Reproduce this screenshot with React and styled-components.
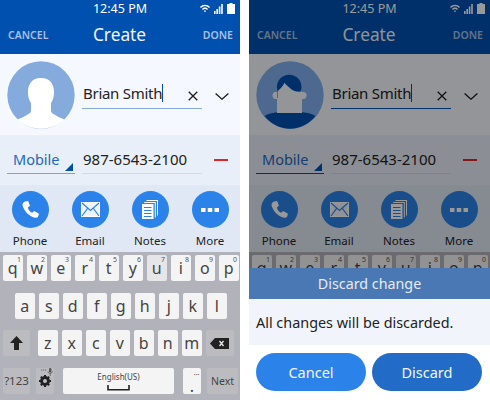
import React from "react";
import styled, { createGlobalStyle } from "styled-components";

const GlobalStyle = createGlobalStyle`
  html, body {
    margin: 0;
    padding: 0;
    background: #fff;
    font-family: "Noto Sans", "Open Sans", sans-serif;
  }
`;

const ROW_ONE = [
  ["q", "1"], ["w", "2"], ["e", "3"], ["r", "4"], ["t", "5"],
  ["y", "6"], ["u", "7"], ["i", "8"], ["o", "9"], ["p", "0"],
];
const ROW_TWO = ["a", "s", "d", "f", "g", "h", "j", "k", "l"];
const ROW_THREE = ["z", "x", "c", "v", "b", "n", "m"];

const WifiIcon = () => (
  <svg width="10" height="9" viewBox="0 0 11 9">
    <path d="M0 2.8C3 -.6 8 -.6 11 2.8L9.9 4C7.5 1.3 3.5 1.3 1.1 4Z" fill="currentColor" />
    <path d="M2.2 5C4 3 7 3 8.8 5L7.7 6.2C6.5 4.8 4.5 4.8 3.3 6.2Z" fill="currentColor" />
    <path d="M4.3 7.2C5 6.5 6 6.5 6.7 7.2L5.5 8.7Z" fill="currentColor" />
  </svg>
);

const SignalIcon = () => (
  <svg width="9" height="10" viewBox="0 0 9 10">
    <rect x="0" y="7" width="1.6" height="3" fill="currentColor" />
    <rect x="2.4" y="5" width="1.6" height="5" fill="currentColor" />
    <rect x="4.8" y="2.5" width="1.6" height="7.5" fill="currentColor" />
    <rect x="7.2" y="0" width="1.6" height="10" fill="currentColor" />
  </svg>
);

const BatteryIcon = () => (
  <svg width="8" height="11" viewBox="0 0 8 11">
    <path d="M2.5 0H5.5V1H8V11H0V1H2.5Z" fill="currentColor" />
  </svg>
);

const ClearIcon = () => (
  <svg width="10" height="10" viewBox="0 0 10 10">
    <path d="M.7 .7L9.3 9.3M9.3 .7L.7 9.3" stroke="#1c1c1c" strokeWidth="1.3" fill="none" />
  </svg>
);

const ChevronIcon = () => (
  <svg width="14" height="7" viewBox="0 0 14 7">
    <path d="M.6 .6L7 6.2L13.4 .6" stroke="#1c1c1c" strokeWidth="1.3" fill="none" />
  </svg>
);

const HandsetIcon = () => (
  <svg width="17" height="17" viewBox="0 0 16 16">
    <path
      d="M3 .5L5.8 0L7.5 4.5L5.5 6C6 8.5 7.5 10 9.5 11L11.5 9.5L16 12L15 15C14 16 12 16 10 15C5 13 1.5 8 .5 4C.2 2.5 1.5 1 3 .5Z"
      fill="#fff"
    />
  </svg>
);

const MailIcon = () => (
  <svg width="19" height="15" viewBox="0 0 19 15">
    <rect x=".6" y=".6" width="17.8" height="13.8" fill="#eef4fd" stroke="#fff" strokeWidth="1.2" />
    <path d="M1 1L9.5 8.5L18 1M1 14L6.8 6.2M18 14L12.2 6.2" stroke="#2b82e8" strokeWidth="1.1" fill="none" />
  </svg>
);

const NotesIcon = () => (
  <svg width="16" height="19" viewBox="0 0 16 19">
    <path d="M4.5 0H16V15.5H15V1H4.5Z" fill="#fff" />
    <path d="M2.2 2H13.8V17.5H12.8V3H2.2Z" fill="#fff" />
    <path d="M0 4H11.5V19H0Z" fill="#fff" />
    <path d="M2 7.5H9.5M2 10.5H9.5M2 13.5H9.5M2 16.5H9.5" stroke="#2b82e8" strokeWidth="1.1" />
  </svg>
);

const MoreIcon = () => (
  <svg width="18" height="4" viewBox="0 0 18 4">
    <rect x="0" y="0" width="4.5" height="4" fill="#fff" />
    <rect x="6.75" y="0" width="4.5" height="4" fill="#fff" />
    <rect x="13.5" y="0" width="4.5" height="4" fill="#fff" />
  </svg>
);

const ShiftIcon = () => (
  <svg width="13" height="14" viewBox="0 0 13 14">
    <path d="M6.5 0L13 7H9V14H4V7H0Z" fill="#222" />
  </svg>
);

const DeleteIcon = () => (
  <svg width="19" height="11" viewBox="0 0 19 11">
    <path d="M5 0H19V11H5L0 5.5Z" fill="#222" />
    <path d="M9.5 3L13.5 8M13.5 3L9.5 8" stroke="#e8e8e8" strokeWidth="1.3" />
  </svg>
);

const GearIcon = () => (
  <svg width="12" height="12" viewBox="0 0 12 12">
    <circle cx="6" cy="6" r="3.6" fill="none" stroke="#222" strokeWidth="2.6" />
    <path d="M6 0V12M0 6H12M1.8 1.8L10.2 10.2M10.2 1.8L1.8 10.2" stroke="#222" strokeWidth="2" />
    <circle cx="6" cy="6" r="2" fill="#bcbcc0" />
  </svg>
);

const MicIcon = () => (
  <svg width="12" height="8" viewBox="0 0 12 8">
    <path d="M0 2H1.2M2 2H3.2M4 2H5.2" stroke="#666" strokeWidth="1" />
    <rect x="8" y="0" width="2.4" height="4.4" rx="1.2" fill="#555" />
    <path d="M7 3.4C7 6 11.4 6 11.4 3.4M9.2 5.4V8" stroke="#555" strokeWidth=".8" fill="none" />
  </svg>
);

const SpaceIcon = () => (
  <svg width="23" height="6" viewBox="0 0 23 6" style={{ marginTop: 3 }}>
    <path d="M1 0V4.8H22V0" stroke="#222" strokeWidth="1.6" fill="none" />
  </svg>
);

const PersonAvatar = () => (
  <svg width="68" height="68" viewBox="0 0 68 68">
    <circle cx="34" cy="34" r="33.7" fill="#85abdc" />
    <path
      d="M34 17C25 17 21 23 21 31C21 36 22 39 24 42L24 50C24 53 14 57 10.5 58.5C16 64 25 67.7 34 67.7C43 67.7 52 64 57.5 58.5C54 57 44 53 44 50L44 42C46 39 47 36 47 31C47 23 43 17 34 17Z"
      fill="#fff"
    />
  </svg>
);

// colours are the undimmed ones, the scrim darkens them
const SketchAvatar = () => (
  <svg width="68" height="68" viewBox="0 0 68 68">
    <circle cx="34" cy="34" r="33.7" fill="#80b0f0" />
    <path d="M8.5 55C14 51.5 24 50.5 34 50.5C44 50.5 54 51.5 59.5 55C53 63 44 67.7 34 67.7C24 67.7 15 63 8.5 55Z" fill="#0050b0" />
    <circle cx="33.2" cy="26" r="12.3" fill="#0050b0" />
    <path d="M21 37V31H19.5C15.5 31 15.5 38 19.5 38H21V52H46V38H47.5C51.5 38 51.5 31 47.5 31H46V30.5C41 31 37 30 35 28C33 26 30 24 28.5 21.7C27 25 24 28 22 30V37Z" fill="#f5f8fe" />
  </svg>
);

const Page = styled.div`
  width: 490px;
  height: 400px;
  display: flex;
  gap: 9px;
  overflow: hidden;
`;

const Screen = styled.div`
  position: relative;
  width: ${(p) => p.$width}px;
  height: 400px;
  display: flex;
  flex-direction: column;
  overflow: hidden;
`;

const Header = styled.header`
  height: 54px;
  background: #0050b0;
  color: #fff;
  display: flex;
  flex-direction: column;
  flex-shrink: 0;
`;

const StatusBar = styled.div`
  position: relative;
  height: 17px;
  display: flex;
  align-items: center;
  justify-content: center;
  font-size: 12.5px;
`;

const StatusIcons = styled.div`
  position: absolute;
  right: 5px;
  top: 3px;
  display: flex;
  align-items: center;
  gap: 4px;
`;

const TitleBar = styled.div`
  flex: 1;
  display: flex;
  align-items: center;
  justify-content: space-between;
  padding: 0 7px 2px 8px;
`;

const TitleAction = styled.span`
  font-size: 10.5px;
  font-weight: 600;
  color: #a6c0e6;
  width: 42px;
  text-align: ${(p) => p.$align};
`;

const Title = styled.span`
  font-size: 17.3px;
  color: #f0f4fb;
  margin-right: 2px;
`;

const ProfileRow = styled.section`
  height: 81px;
  background: #f5f8fe;
  display: flex;
  align-items: center;
  gap: 7px;
  padding: 0 0 0 7px;
  flex-shrink: 0;
`;

const Field = styled.div`
  width: ${(p) => p.$width}px;
  height: ${(p) => p.$height}px;
  flex-shrink: 0;
  border-bottom: 1.5px solid ${(p) => p.$line};
  display: flex;
  align-items: center;
  position: relative;
  box-sizing: border-box;
  padding-bottom: 2px;
  font-size: 15px;
  color: #222;
`;

const NameField = styled(Field)`
  justify-content: space-between;
  padding-left: 1px;
  padding-right: 4px;
`;

const NameText = styled.span`
  border-right: 1px solid #0050b0;
  line-height: 18px;
  letter-spacing: -0.28px;
`;

const ClearWrap = styled.span`
  display: flex;
  margin-top: 6px;
`;

const ChevronWrap = styled.span`
  display: flex;
  margin: 3px 0 0 6px;
`;

const PhoneRow = styled.section`
  height: 50px;
  background: #e8eff8;
  display: flex;
  align-items: flex-end;
  gap: 7px;
  padding: 0 0 11px 7px;
  box-sizing: border-box;
  flex-shrink: 0;
`;

const TypeField = styled(Field)`
  padding-left: 6px;
  color: #2368c0;
  font-size: 14.5px;
`;

const Triangle = styled.span`
  position: absolute;
  right: 2px;
  bottom: 2px;
  width: 0;
  height: 0;
  border-style: solid;
  border-width: 0 0 8px 8px;
  border-color: transparent transparent #0050b0 transparent;
`;

const NumberField = styled(Field)`
  padding-left: 1px;
`;

const MinusButton = styled.span`
  width: 14px;
  height: 2px;
  flex-shrink: 0;
  background: #e0262c;
  margin: 0 0 13px 5px;
`;

const Actions = styled.nav`
  height: 67px;
  background: #dfe8f4;
  display: grid;
  grid-template-columns: repeat(4, 60px);
  flex-shrink: 0;
`;

const ActionItem = styled.div`
  display: flex;
  flex-direction: column;
  align-items: center;
  padding-top: 6px;
  font-size: 11.5px;
  color: #222;
`;

const ActionCircle = styled.span`
  width: 37px;
  height: 37px;
  border-radius: 50%;
  background: #2b82e8;
  display: flex;
  align-items: center;
  justify-content: center;
  margin-bottom: 5px;
`;

const Keyboard = styled.section`
  flex: 1;
  background: #b2b2ba;
  padding-top: 3px;
  display: flex;
  flex-direction: column;
  gap: 11.5px;
`;

const KeyRow = styled.div`
  height: 26px;
  display: flex;
  gap: 4.5px;
  padding: 0 ${(p) => p.$inset || 3}px;
`;

const Key = styled.div`
  position: relative;
  width: ${(p) => p.$width || 19.5}px;
  margin-left: ${(p) => p.$before || 0}px;
  flex-shrink: 0;
  border-radius: 2px;
  background: ${(p) => (p.$fn ? "#bcbcc0" : p.$pressed ? "#e6e6e8" : "#f4f4f4")};
  color: #444;
  font-size: ${(p) => p.$size || 16}px;
  display: flex;
  flex-direction: column;
  align-items: center;
  justify-content: center;
`;

const KeyHint = styled.span`
  position: absolute;
  top: 0;
  right: 1.5px;
  font-size: 7px;
  line-height: 9px;
  color: #555;
`;

const PeriodKey = styled(Key)`
  justify-content: flex-end;
  line-height: 15px;
`;

const SpaceLabel = styled.span`
  font-size: 8px;
  line-height: 11px;
  color: #444;
`;

const Scrim = styled.div`
  position: absolute;
  inset: 0;
  background: rgba(0, 0, 0, 0.4);
  display: flex;
  flex-direction: column;
  justify-content: flex-end;
`;

const Dialog = styled.div`
  display: flex;
  flex-direction: column;
`;

const DialogTitle = styled.div`
  height: 31px;
  background: #4a78b4;
  color: #e4ebf5;
  font-size: 14.3px;
  display: flex;
  align-items: center;
  justify-content: center;
`;

const DialogBody = styled.div`
  height: 46px;
  background: #f1f4fa;
  color: #222;
  font-size: 14.4px;
  display: flex;
  align-items: center;
  padding-left: 7px;
`;

const DialogButtons = styled.div`
  height: 55px;
  background: #fff;
  display: flex;
  gap: 6px;
  padding: 8px 8px 9px 7px;
  box-sizing: border-box;
`;

const DialogButton = styled.button`
  flex: 1;
  border: none;
  border-radius: 19px;
  background: ${(p) => (p.$strong ? "#226cc8" : "#2b82e8")};
  color: #f2f6fc;
  font-family: inherit;
  font-size: 14.5px;
  padding: 0;
`;

const Phone = ({ width, dimmed, children }) => (
  <Screen $width={width}>
    <Header>
      <StatusBar>
        12:45 PM
        <StatusIcons>
          <WifiIcon />
          <SignalIcon />
          <BatteryIcon />
        </StatusIcons>
      </StatusBar>
      <TitleBar>
        <TitleAction $align="left">CANCEL</TitleAction>
        <Title>Create</Title>
        <TitleAction $align="right">DONE</TitleAction>
      </TitleBar>
    </Header>
    <ProfileRow>
      {dimmed ? <SketchAvatar /> : <PersonAvatar />}
      <NameField $width={120} $height={29} $line={dimmed ? "#0050b0" : "#85abdc"}>
        <NameText>Brian Smith</NameText>
        <ClearWrap>
          <ClearIcon />
        </ClearWrap>
      </NameField>
      <ChevronWrap>
        <ChevronIcon />
      </ChevronWrap>
    </ProfileRow>
    <PhoneRow>
      <TypeField $width={68} $height={28} $line={dimmed ? "#0050b0" : "#7aa3da"}>
        Mobile
        <Triangle />
      </TypeField>
      <NumberField $width={120} $height={28} $line="#d4d9e4">
        987-6543-2100
      </NumberField>
      <MinusButton />
    </PhoneRow>
    <Actions>
      <ActionItem>
        <ActionCircle>
          <HandsetIcon />
        </ActionCircle>
        Phone
      </ActionItem>
      <ActionItem>
        <ActionCircle>
          <MailIcon />
        </ActionCircle>
        Email
      </ActionItem>
      <ActionItem>
        <ActionCircle>
          <NotesIcon />
        </ActionCircle>
        Notes
      </ActionItem>
      <ActionItem>
        <ActionCircle>
          <MoreIcon />
        </ActionCircle>
        More
      </ActionItem>
    </Actions>
    <Keyboard>
      <KeyRow>
        {ROW_ONE.map(([letter, hint]) => (
          <Key key={letter} $pressed={letter === "u"}>
            {letter}
            <KeyHint>{hint}</KeyHint>
          </Key>
        ))}
      </KeyRow>
      {/* the dialog covers everything below the first row */}
      {!dimmed && (
        <>
          <KeyRow $inset={15}>
            {ROW_TWO.map((letter) => (
              <Key key={letter}>{letter}</Key>
            ))}
          </KeyRow>
          <KeyRow>
            <Key $fn $width={27}>
              <ShiftIcon />
            </Key>
            <Key $before={3.5}>z</Key>
            {ROW_THREE.slice(1).map((letter) => (
              <Key key={letter}>{letter}</Key>
            ))}
            <Key $fn $width={28} $before={-0.5}>
              <DeleteIcon />
            </Key>
          </KeyRow>
          <KeyRow>
            <Key $fn $width={27} $size={11.5}>?123</Key>
            <Key $fn $width={18} $before={1.5}>
              <KeyHint>
                <MicIcon />
              </KeyHint>
              <GearIcon />
            </Key>
            <Key $width={111} $before={4.5}>
              <SpaceLabel>English(US)</SpaceLabel>
              <SpaceIcon />
            </Key>
            <PeriodKey $width={18} $before={4.5}>
              <KeyHint>...</KeyHint>.
            </PeriodKey>
            <Key $fn $width={31} $before={1.5} $size={10.5}>Next</Key>
          </KeyRow>
        </>
      )}
    </Keyboard>
    {children}
  </Screen>
);

const App = () => (
  <>
    <GlobalStyle />
    <Page>
      <Phone width={240} />
      <Phone width={241} dimmed>
        <Scrim>
          <Dialog>
            <DialogTitle>Discard change</DialogTitle>
            <DialogBody>All changes will be discarded.</DialogBody>
            <DialogButtons>
              <DialogButton>Cancel</DialogButton>
              <DialogButton $strong>Discard</DialogButton>
            </DialogButtons>
          </Dialog>
        </Scrim>
      </Phone>
    </Page>
  </>
);

export default App;
